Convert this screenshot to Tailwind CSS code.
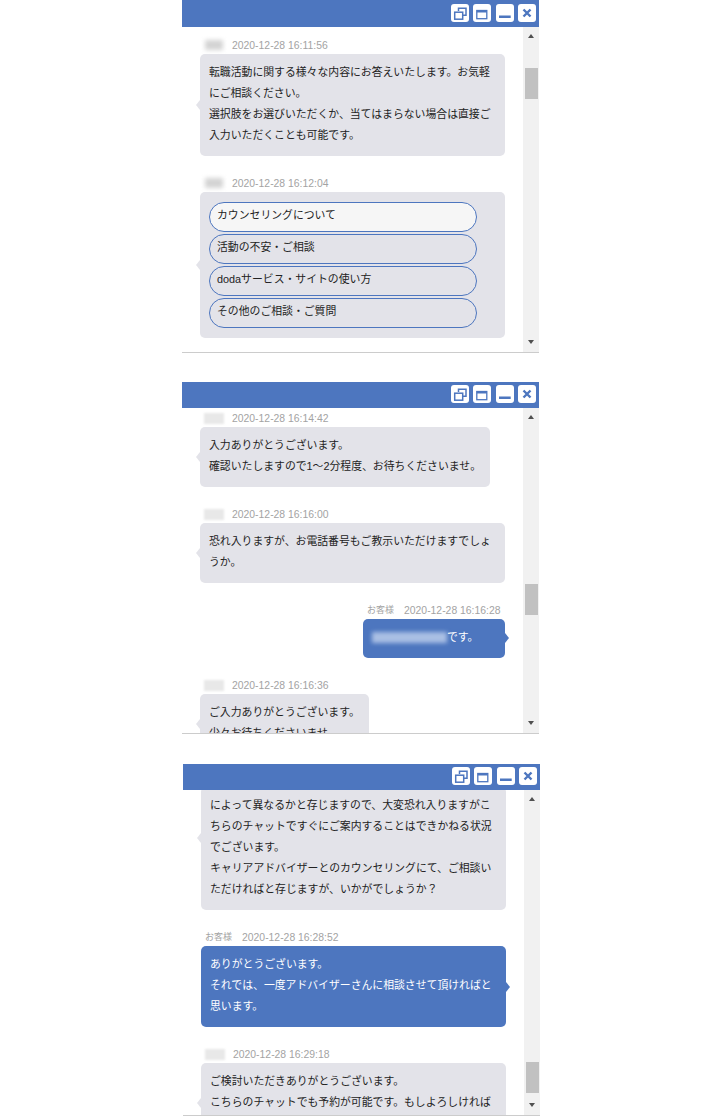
<!DOCTYPE html>
<html lang="ja">
<head>
<meta charset="utf-8">
<script src="https://cdn.jsdelivr.net/npm/@tailwindcss/browser@4"></script>
</head>
<body class="bg-white font-['Liberation_Sans','Noto_Sans_CJK_JP',sans-serif] text-[10.85px] leading-[21px] text-[#222]">
<div class="w-[720px] h-[1117px] overflow-hidden">

<!-- Panel 1 -->
<section class="ml-[182px] w-[357px] h-[353px] flex flex-col border-b border-[#ccc]">
  <header class="h-[27px] shrink-0 bg-[#4d76bf] flex justify-end items-start gap-[4.5px] pr-[3px] pt-[4px]">
    <button class="w-[18px] h-[18px] rounded-[3px] bg-white"><svg viewBox="0 0 18 18" class="w-[18px] h-[18px]" fill="none" stroke="#4d76bf" stroke-width="1.5"><rect x="3.7" y="8.2" width="8" height="7"/><path d="M7.5 7V4.2h7.5v7h-3"/></svg></button>
    <button class="w-[18px] h-[18px] rounded-[3px] bg-white"><svg viewBox="0 0 18 18" class="w-[18px] h-[18px]" fill="none" stroke="#4d76bf"><rect x="3.8" y="6.5" width="10" height="8.2" stroke-width="1.3"/><path d="M3.8 7.5h10" stroke-width="2"/></svg></button>
    <button class="w-[18px] h-[18px] rounded-[3px] bg-white"><svg viewBox="0 0 18 18" class="w-[18px] h-[18px]"><rect x="3" y="11.5" width="11.7" height="2.5" fill="#4d76bf"/></svg></button>
    <button class="w-[18px] h-[18px] rounded-[3px] bg-white"><svg viewBox="0 0 18 18" class="w-[18px] h-[18px]" stroke="#4d76bf" stroke-width="2.4"><path d="M5.5 5.5l7 7M12.5 5.5l-7 7"/></svg></button>
  </header>
  <div class="flex-1 min-h-0 flex">
    <div class="flex-1 min-w-0 overflow-hidden pt-[11px] pl-[18px]">
      <article class="mb-[20px]">
        <div class="h-[14px] mb-[2px] ml-[5px] flex items-center text-[10.4px] leading-[14px] text-[#a3a3a3]"><span class="w-[18px] h-[10px] mr-[9px] bg-[#d4d4d4] blur-[2px]"></span><span class="pt-[2px]">2020-12-28 16:11:56</span></div>
        <div class="relative w-[305px] rounded-[5px] bg-[#e3e3e9] px-[9px] pt-[8px] pb-[10px] whitespace-nowrap">
          <span class="absolute left-[-4px] top-[46px] border-y-[5px] border-r-[4px] border-y-transparent border-r-[#e3e3e9]"></span>
          転職活動に関する様々な内容にお答えいたします。お気軽<br>にご相談ください。<br>選択肢をお選びいただくか、当てはまらない場合は直接ご<br>入力いただくことも可能です。
        </div>
      </article>
      <article>
        <div class="h-[14px] mb-[2px] ml-[5px] flex items-center text-[10.4px] leading-[14px] text-[#a3a3a3]"><span class="w-[18px] h-[10px] mr-[9px] bg-[#d4d4d4] blur-[2px]"></span><span class="pt-[2px]">2020-12-28 16:12:04</span></div>
        <div class="relative w-[305px] rounded-[5px] bg-[#e3e3e9] px-[9px] py-[10px] flex flex-col gap-[2px]">
          <span class="absolute left-[-4px] top-[68px] border-y-[5px] border-r-[4px] border-y-transparent border-r-[#e3e3e9]"></span>
          <div class="w-[268px] h-[30px] rounded-[15px] border border-[#4d76bf] bg-[#f6f6f6] pl-[7px] leading-[25px]">カウンセリングについて</div>
          <div class="w-[268px] h-[30px] rounded-[15px] border border-[#4d76bf] pl-[7px] leading-[25px]">活動の不安・ご相談</div>
          <div class="w-[268px] h-[30px] rounded-[15px] border border-[#4d76bf] pl-[7px] leading-[25px]">dodaサービス・サイトの使い方</div>
          <div class="w-[268px] h-[30px] rounded-[15px] border border-[#4d76bf] pl-[7px] leading-[25px]">その他のご相談・ご質問</div>
        </div>
      </article>
    </div>
    <div class="w-[16px] shrink-0 bg-[#f1f1f1] flex flex-col items-center pt-[7px] pb-[8px]">
      <span class="border-x-[3.5px] border-b-[4px] border-x-transparent border-b-[#505050]"></span>
      <span class="w-[13px] h-[31px] mt-[30px] bg-[#c1c1c1]"></span>
      <span class="mt-auto border-x-[3.5px] border-t-[4px] border-x-transparent border-t-[#505050]"></span>
    </div>
  </div>
</section>

<!-- Panel 2 -->
<section class="mt-[29px] ml-[182px] w-[357px] h-[352px] flex flex-col border-b border-[#ccc]">
  <header class="h-[26px] shrink-0 bg-[#4d76bf] flex justify-end items-start gap-[4.5px] pr-[3px] pt-[3px]">
    <button class="w-[18px] h-[18px] rounded-[3px] bg-white"><svg viewBox="0 0 18 18" class="w-[18px] h-[18px]" fill="none" stroke="#4d76bf" stroke-width="1.5"><rect x="3.7" y="8.2" width="8" height="7"/><path d="M7.5 7V4.2h7.5v7h-3"/></svg></button>
    <button class="w-[18px] h-[18px] rounded-[3px] bg-white"><svg viewBox="0 0 18 18" class="w-[18px] h-[18px]" fill="none" stroke="#4d76bf"><rect x="3.8" y="6.5" width="10" height="8.2" stroke-width="1.3"/><path d="M3.8 7.5h10" stroke-width="2"/></svg></button>
    <button class="w-[18px] h-[18px] rounded-[3px] bg-white"><svg viewBox="0 0 18 18" class="w-[18px] h-[18px]"><rect x="3" y="11.5" width="11.7" height="2.5" fill="#4d76bf"/></svg></button>
    <button class="w-[18px] h-[18px] rounded-[3px] bg-white"><svg viewBox="0 0 18 18" class="w-[18px] h-[18px]" stroke="#4d76bf" stroke-width="2.4"><path d="M5.5 5.5l7 7M12.5 5.5l-7 7"/></svg></button>
  </header>
  <div class="flex-1 min-h-0 flex">
    <div class="flex-1 min-w-0 overflow-hidden pt-[3px] pl-[18px]">
      <article class="mb-[20px]">
        <div class="h-[14px] mb-[2px] ml-[4px] flex items-center text-[10.4px] leading-[14px] text-[#a3a3a3]"><span class="w-[20px] h-[11px] mr-[8px] bg-[#e8e8e8] blur-[1px]"></span><span class="pt-[2px]">2020-12-28 16:14:42</span></div>
        <div class="relative w-[290px] rounded-[5px] bg-[#e3e3e9] px-[9px] pt-[8px] pb-[10px] whitespace-nowrap">
          <span class="absolute left-[-4px] top-[25px] border-y-[5px] border-r-[4px] border-y-transparent border-r-[#e3e3e9]"></span>
          入力ありがとうございます。<br>確認いたしますので1～2分程度、お待ちくださいませ。
        </div>
      </article>
      <article class="mb-[20px]">
        <div class="h-[14px] mb-[2px] ml-[4px] flex items-center text-[10.4px] leading-[14px] text-[#a3a3a3]"><span class="w-[20px] h-[11px] mr-[8px] bg-[#e8e8e8] blur-[1px]"></span><span class="pt-[2px]">2020-12-28 16:16:00</span></div>
        <div class="relative w-[305px] rounded-[5px] bg-[#e3e3e9] px-[9px] pt-[8px] pb-[10px] whitespace-nowrap">
          <span class="absolute left-[-4px] top-[25px] border-y-[5px] border-r-[4px] border-y-transparent border-r-[#e3e3e9]"></span>
          恐れ入りますが、お電話番号もご教示いただけますでしょ<br>うか。
        </div>
      </article>
      <article class="mb-[20px] ml-[163px] w-[142px]">
        <div class="h-[14px] mb-[2px] ml-[4px] flex items-center gap-[10px] text-[10.4px] leading-[14px] text-[#a3a3a3] whitespace-nowrap"><span class="text-[9px]">お客様</span><span class="pt-[2px]">2020-12-28 16:16:28</span></div>
        <div class="relative rounded-[5px] bg-[#4d76bf] text-white px-[9px] pt-[8px] pb-[10px] whitespace-nowrap flex items-center">
          <span class="absolute right-[-4px] top-[14px] border-y-[5px] border-l-[4px] border-y-transparent border-l-[#4d76bf]"></span>
          <span class="w-[75px] h-[11px] bg-[#a9bfe4] blur-[2px]"></span>です。
        </div>
      </article>
      <article>
        <div class="h-[14px] mb-[2px] ml-[4px] flex items-center text-[10.4px] leading-[14px] text-[#a3a3a3]"><span class="w-[20px] h-[11px] mr-[8px] bg-[#e8e8e8] blur-[1px]"></span><span class="pt-[2px]">2020-12-28 16:16:36</span></div>
        <div class="relative w-[169px] rounded-[5px] bg-[#e3e3e9] px-[9px] pt-[8px] pb-[10px] whitespace-nowrap">
          <span class="absolute left-[-4px] top-[25px] border-y-[5px] border-r-[4px] border-y-transparent border-r-[#e3e3e9]"></span>
          ご入力ありがとうございます。<br>少々お待ちくださいませ。
        </div>
      </article>
    </div>
    <div class="w-[16px] shrink-0 bg-[#f1f1f1] flex flex-col items-center pt-[7px] pb-[8px]">
      <span class="border-x-[3.5px] border-b-[4px] border-x-transparent border-b-[#505050]"></span>
      <span class="w-[13px] h-[31px] mt-[165px] bg-[#c1c1c1]"></span>
      <span class="mt-auto border-x-[3.5px] border-t-[4px] border-x-transparent border-t-[#505050]"></span>
    </div>
  </div>
</section>

<!-- Panel 3 -->
<section class="mt-[30px] ml-[183px] w-[357px] h-[352px] flex flex-col border-b border-[#ccc]">
  <header class="relative z-10 h-[26px] shrink-0 bg-[#4d76bf] flex justify-end items-start gap-[4.5px] pr-[3px] pt-[3px]">
    <button class="w-[18px] h-[18px] rounded-[3px] bg-white"><svg viewBox="0 0 18 18" class="w-[18px] h-[18px]" fill="none" stroke="#4d76bf" stroke-width="1.5"><rect x="3.7" y="8.2" width="8" height="7"/><path d="M7.5 7V4.2h7.5v7h-3"/></svg></button>
    <button class="w-[18px] h-[18px] rounded-[3px] bg-white"><svg viewBox="0 0 18 18" class="w-[18px] h-[18px]" fill="none" stroke="#4d76bf"><rect x="3.8" y="6.5" width="10" height="8.2" stroke-width="1.3"/><path d="M3.8 7.5h10" stroke-width="2"/></svg></button>
    <button class="w-[18px] h-[18px] rounded-[3px] bg-white"><svg viewBox="0 0 18 18" class="w-[18px] h-[18px]"><rect x="3" y="11.5" width="11.7" height="2.5" fill="#4d76bf"/></svg></button>
    <button class="w-[18px] h-[18px] rounded-[3px] bg-white"><svg viewBox="0 0 18 18" class="w-[18px] h-[18px]" stroke="#4d76bf" stroke-width="2.4"><path d="M5.5 5.5l7 7M12.5 5.5l-7 7"/></svg></button>
  </header>
  <div class="flex-1 min-h-0 flex">
    <div class="flex-1 min-w-0 overflow-hidden pl-[18px]">
      <article class="mb-[20px] -mt-[3px]">
        <div class="relative w-[305px] rounded-[5px] bg-[#e3e3e9] px-[9px] pt-[8px] pb-[10px] whitespace-nowrap">
          <span class="absolute left-[-4px] top-[46px] border-y-[5px] border-r-[4px] border-y-transparent border-r-[#e3e3e9]"></span>
          によって異なるかと存じますので、大変恐れ入りますがこ<br>ちらのチャットですぐにご案内することはできかねる状況<br>でございます。<br>キャリアアドバイザーとのカウンセリングにて、ご相談い<br>ただければと存じますが、いかがでしょうか？
        </div>
      </article>
      <article class="mb-[20px]">
        <div class="h-[14px] mb-[2px] ml-[4px] flex items-center gap-[10px] text-[10.4px] leading-[14px] text-[#a3a3a3] whitespace-nowrap"><span class="text-[9px]">お客様</span><span class="pt-[2px]">2020-12-28 16:28:52</span></div>
        <div class="relative w-[305px] rounded-[5px] bg-[#4d76bf] text-white px-[9px] pt-[8px] pb-[10px] whitespace-nowrap">
          <span class="absolute right-[-4px] top-[36px] border-y-[5px] border-l-[4px] border-y-transparent border-l-[#4d76bf]"></span>
          ありがとうございます。<br>それでは、一度アドバイザーさんに相談させて頂ければと<br>思います。
        </div>
      </article>
      <article>
        <div class="h-[14px] mb-[2px] ml-[4px] flex items-center text-[10.4px] leading-[14px] text-[#a3a3a3]"><span class="w-[20px] h-[11px] mr-[8px] bg-[#e8e8e8] blur-[1px]"></span><span class="pt-[2px]">2020-12-28 16:29:18</span></div>
        <div class="relative w-[305px] rounded-[5px] bg-[#e3e3e9] px-[9px] pt-[8px] pb-[10px] whitespace-nowrap">
          <span class="absolute left-[-4px] top-[35px] border-y-[5px] border-r-[4px] border-y-transparent border-r-[#e3e3e9]"></span>
          ご検討いただきありがとうございます。<br>こちらのチャットでも予約が可能です。もしよろしければ
        </div>
      </article>
    </div>
    <div class="w-[16px] shrink-0 bg-[#f1f1f1] flex flex-col items-center pt-[7px] pb-[8px]">
      <span class="border-x-[3.5px] border-b-[4px] border-x-transparent border-b-[#505050]"></span>
      <span class="w-[13px] h-[31px] mt-[261px] bg-[#c1c1c1]"></span>
      <span class="mt-auto border-x-[3.5px] border-t-[4px] border-x-transparent border-t-[#505050]"></span>
    </div>
  </div>
</section>
</div>
</body>
</html>
